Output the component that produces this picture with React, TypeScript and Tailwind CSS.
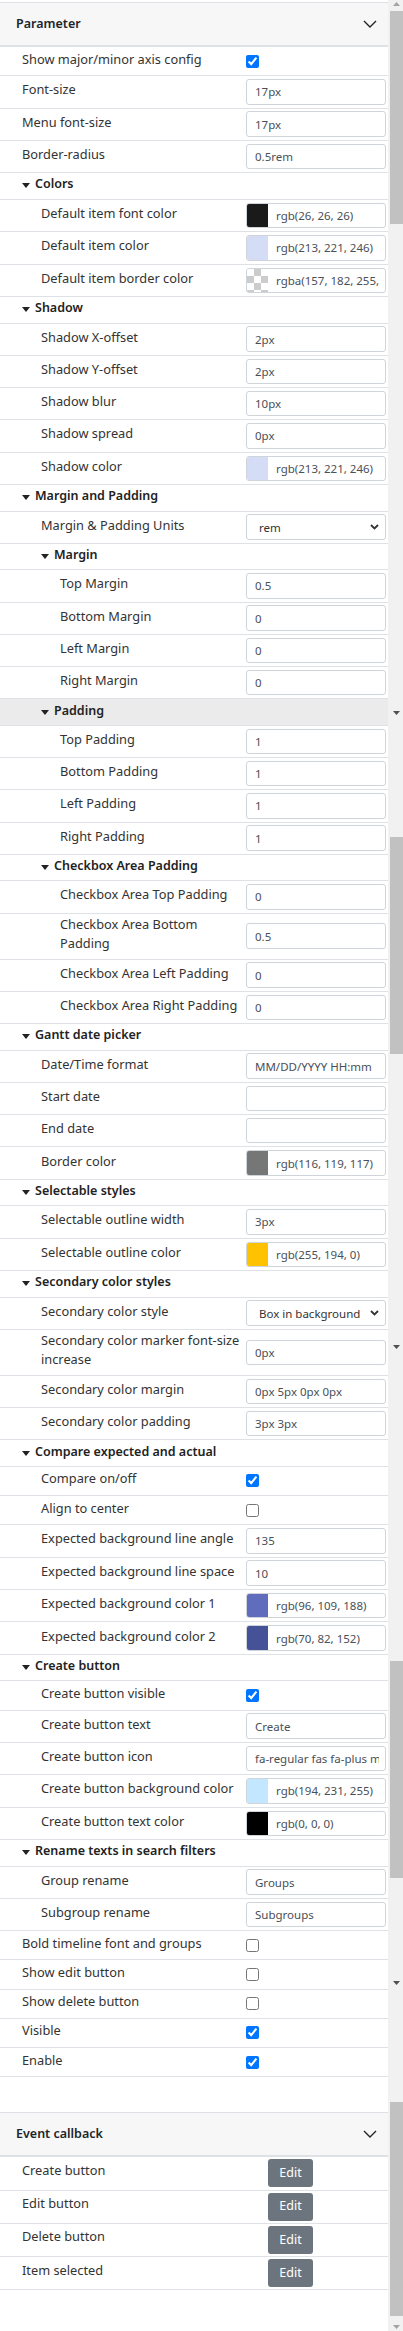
type Item =
  | { k: 'check'; label: string; on: boolean; lv: number }
  | { k: 'input'; label: string; v: string; lv: number; tall?: boolean }
  | { k: 'color'; label: string; v: string; sw: string; lv: number }
  | { k: 'select'; label: string; v: string; lv: number }
  | { k: 'head'; label: string; lv: number; hl?: boolean }

const indent = ['pl-[22px]', 'pl-[41px]', 'pl-[60px]']

const items: Item[] = [
  { k: 'check', label: 'Show major/minor axis config', on: true, lv: 0 },
  { k: 'input', label: 'Font-size', v: '17px', lv: 0 },
  { k: 'input', label: 'Menu font-size', v: '17px', lv: 0 },
  { k: 'input', label: 'Border-radius', v: '0.5rem', lv: 0 },
  { k: 'head', label: 'Colors', lv: 0 },
  { k: 'color', label: 'Default item font color', v: 'rgb(26, 26, 26)', sw: 'bg-[#1a1a1a]', lv: 1 },
  { k: 'color', label: 'Default item color', v: 'rgb(213, 221, 246)', sw: 'bg-[#d5ddf6]', lv: 1 },
  { k: 'color', label: 'Default item border color', v: 'rgba(157, 182, 255, 0)', sw: 'checker', lv: 1 },
  { k: 'head', label: 'Shadow', lv: 0 },
  { k: 'input', label: 'Shadow X-offset', v: '2px', lv: 1 },
  { k: 'input', label: 'Shadow Y-offset', v: '2px', lv: 1 },
  { k: 'input', label: 'Shadow blur', v: '10px', lv: 1 },
  { k: 'input', label: 'Shadow spread', v: '0px', lv: 1 },
  { k: 'color', label: 'Shadow color', v: 'rgb(213, 221, 246)', sw: 'bg-[#d5ddf6]', lv: 1 },
  { k: 'head', label: 'Margin and Padding', lv: 0 },
  { k: 'select', label: 'Margin & Padding Units', v: 'rem', lv: 1 },
  { k: 'head', label: 'Margin', lv: 1 },
  { k: 'input', label: 'Top Margin', v: '0.5', lv: 2 },
  { k: 'input', label: 'Bottom Margin', v: '0', lv: 2 },
  { k: 'input', label: 'Left Margin', v: '0', lv: 2 },
  { k: 'input', label: 'Right Margin', v: '0', lv: 2 },
  { k: 'head', label: 'Padding', lv: 1, hl: true },
  { k: 'input', label: 'Top Padding', v: '1', lv: 2 },
  { k: 'input', label: 'Bottom Padding', v: '1', lv: 2 },
  { k: 'input', label: 'Left Padding', v: '1', lv: 2 },
  { k: 'input', label: 'Right Padding', v: '1', lv: 2 },
  { k: 'head', label: 'Checkbox Area Padding', lv: 1 },
  { k: 'input', label: 'Checkbox Area Top Padding', v: '0', lv: 2 },
  { k: 'input', label: 'Checkbox Area Bottom Padding', v: '0.5', lv: 2, tall: true },
  { k: 'input', label: 'Checkbox Area Left Padding', v: '0', lv: 2 },
  { k: 'input', label: 'Checkbox Area Right Padding', v: '0', lv: 2 },
  { k: 'head', label: 'Gantt date picker', lv: 0 },
  { k: 'input', label: 'Date/Time format', v: 'MM/DD/YYYY HH:mm', lv: 1 },
  { k: 'input', label: 'Start date', v: '', lv: 1 },
  { k: 'input', label: 'End date', v: '', lv: 1 },
  { k: 'color', label: 'Border color', v: 'rgb(116, 119, 117)', sw: 'bg-[#747775]', lv: 1 },
  { k: 'head', label: 'Selectable styles', lv: 0 },
  { k: 'input', label: 'Selectable outline width', v: '3px', lv: 1 },
  { k: 'color', label: 'Selectable outline color', v: 'rgb(255, 194, 0)', sw: 'bg-[#ffc200]', lv: 1 },
  { k: 'head', label: 'Secondary color styles', lv: 0 },
  { k: 'select', label: 'Secondary color style', v: 'Box in background', lv: 1 },
  { k: 'input', label: 'Secondary color marker font-size increase', v: '0px', lv: 1, tall: true },
  { k: 'input', label: 'Secondary color margin', v: '0px 5px 0px 0px', lv: 1 },
  { k: 'input', label: 'Secondary color padding', v: '3px 3px', lv: 1 },
  { k: 'head', label: 'Compare expected and actual', lv: 0 },
  { k: 'check', label: 'Compare on/off', on: true, lv: 1 },
  { k: 'check', label: 'Align to center', on: false, lv: 1 },
  { k: 'input', label: 'Expected background line angle', v: '135', lv: 1 },
  { k: 'input', label: 'Expected background line space', v: '10', lv: 1 },
  { k: 'color', label: 'Expected background color 1', v: 'rgb(96, 109, 188)', sw: 'bg-[#606dbc]', lv: 1 },
  { k: 'color', label: 'Expected background color 2', v: 'rgb(70, 82, 152)', sw: 'bg-[#465298]', lv: 1 },
  { k: 'head', label: 'Create button', lv: 0 },
  { k: 'check', label: 'Create button visible', on: true, lv: 1 },
  { k: 'input', label: 'Create button text', v: 'Create', lv: 1 },
  { k: 'input', label: 'Create button icon', v: 'fa-regular fas fa-plus me-2', lv: 1 },
  { k: 'color', label: 'Create button background color', v: 'rgb(194, 231, 255)', sw: 'bg-[#c2e7ff]', lv: 1 },
  { k: 'color', label: 'Create button text color', v: 'rgb(0, 0, 0)', sw: 'bg-[#000000]', lv: 1 },
  { k: 'head', label: 'Rename texts in search filters', lv: 0 },
  { k: 'input', label: 'Group rename', v: 'Groups', lv: 1 },
  { k: 'input', label: 'Subgroup rename', v: 'Subgroups', lv: 1 },
  { k: 'check', label: 'Bold timeline font and groups', on: false, lv: 0 },
  { k: 'check', label: 'Show edit button', on: false, lv: 0 },
  { k: 'check', label: 'Show delete button', on: false, lv: 0 },
  { k: 'check', label: 'Visible', on: true, lv: 0 },
  { k: 'check', label: 'Enable', on: true, lv: 0 },
]

const events = ['Create button', 'Edit button', 'Delete button', 'Item selected']

function Chevron() {
  return (
    <svg width="14" height="8" viewBox="0 0 14 8" fill="none">
      <path d="M1 1l6 6 6-6" stroke="#212529" strokeWidth="1.4" />
    </svg>
  )
}

function Caret() {
  return (
    <svg width="8" height="5" viewBox="0 0 8 5" className="mr-[5px] shrink-0">
      <path d="M0 0h8L4 5z" fill="#222" />
    </svg>
  )
}

function PanelHeader({ title }: { title: string }) {
  return (
    <div className="flex items-center justify-between h-[45px] pl-4 pr-[11px] bg-[#f7f7f7] border-t border-b-2 border-[#dee2e6]">
      <span className="font-semibold text-[12.5px] text-[#212529]">{title}</span>
      <Chevron />
    </div>
  )
}

function Label({ text, lv }: { text: string; lv: number }) {
  return <div className={`flex-1 min-w-0 pr-[4px] pb-[4px] leading-[19px] ${indent[lv]}`}>{text}</div>
}

function Field({ children }: { children: React.ReactNode }) {
  return (
    <div className="w-[140px] mr-[2px] h-[25.5px] border border-[#ced4da] rounded-[3px] flex items-center overflow-hidden bg-white">
      {children}
    </div>
  )
}

function TextValue({ v }: { v: string }) {
  return (
    <input
      readOnly
      value={v}
      className="w-full min-w-0 h-full bg-transparent outline-none pl-[8px] pr-[6px] text-[11.5px] text-[#495057]"
    />
  )
}

function Row({ item }: { item: Item }) {
  if (item.k === 'head') {
    return (
      <div
        className={`flex items-center h-[26.5px] border-b border-[#dee2e6] font-semibold text-[12.5px] text-[#222] ${indent[item.lv]} ${item.hl ? 'bg-[#ebebeb]' : ''}`}
      >
        <Caret />
        <span className="pb-[2px]">{item.label}</span>
      </div>
    )
  }
  if (item.k === 'check') {
    return (
      <div className="flex items-center h-[29.25px] border-b border-[#dee2e6]">
        <Label text={item.label} lv={item.lv} />
        <div className="w-[142px] flex items-center">
          <input type="checkbox" defaultChecked={item.on} className="m-0 w-[13px] h-[13px]" />
        </div>
      </div>
    )
  }
  if (item.k === 'color') {
    return (
      <div className="flex items-center h-[32.5px] border-b border-[#dee2e6]">
        <Label text={item.label} lv={item.lv} />
        <Field>
          {item.sw === 'checker' ? (
            <div className="w-[21px] h-full shrink-0 bg-[conic-gradient(#cccccc_25%,#ffffff_0_50%,#cccccc_0_75%,#ffffff_0)] bg-[length:14px_14px]" />
          ) : (
            <div className={`w-[21px] h-full shrink-0 ${item.sw}`} />
          )}
          <TextValue v={item.v} />
        </Field>
      </div>
    )
  }
  if (item.k === 'select') {
    return (
      <div className="flex items-center h-[32.25px] border-b border-[#dee2e6]">
        <Label text={item.label} lv={item.lv} />
        <Field>
          <span className="flex-1 pl-[12px] text-[11.5px] text-[#333]">{item.v}</span>
          <svg width="9" height="6" viewBox="0 0 9 6" fill="none" className="mr-[6px]">
            <path d="M1 1l3.5 3.5L8 1" stroke="#333" strokeWidth="1.8" />
          </svg>
        </Field>
      </div>
    )
  }
  return (
    <div className={`flex items-center border-b border-[#dee2e6] ${item.tall ? 'h-[46px]' : 'h-[32.25px]'}`}>
      <Label text={item.label} lv={item.lv} />
      <Field>
        <TextValue v={item.v} />
      </Field>
    </div>
  )
}

function ArrowDown({ light }: { light?: boolean }) {
  return (
    <div className="h-[6px] flex items-center justify-center pl-[2px]">
      <svg width="7" height="4" viewBox="0 0 7 4">
        <path d="M0 0h7L3.5 4z" fill={light ? '#a3a3a3' : '#505050'} />
      </svg>
    </div>
  )
}

function Scrollbar() {
  return (
    <div className="w-[15px] flex flex-col bg-[#f1f1f1]">
      <div className="h-[11px] flex justify-center pt-[2px] pl-[2px]">
        <svg width="7" height="4" viewBox="0 0 7 4">
          <path d="M0 4h7L3.5 0z" fill="#a3a3a3" />
        </svg>
      </div>
      <div className="h-[213px] ml-[2px] bg-[#c1c1c1]" />
      <div className="h-[486px]" />
      <ArrowDown />
      <div className="h-[121px]" />
      <div className="h-[217px] ml-[2px] bg-[#c1c1c1]" />
      <div className="h-[290px]" />
      <ArrowDown />
      <div className="h-[311px]" />
      <div className="h-[217px] ml-[2px] bg-[#c1c1c1]" />
      <div className="h-[102px]" />
      <ArrowDown />
      <div className="h-[116px]" />
      <div className="h-[214px] ml-[2px] bg-[#c1c1c1]" />
      <div className="h-[8px]" />
      <ArrowDown light />
      <div className="flex-1" />
    </div>
  )
}

export default function App() {
  return (
    <div className="w-[403px] h-[2331px] flex bg-white overflow-hidden font-['Noto_Sans',sans-serif] text-[12.8px] text-[#333]">
      <div className="w-[388px] flex flex-col pt-[2px]">
        <PanelHeader title="Parameter" />
        {items.map((item, i) => (
          <Row key={i} item={item} />
        ))}
        <div className="h-[35px]" />
        <PanelHeader title="Event callback" />
        {events.map((e) => (
          <div key={e} className="flex items-center h-[33.25px] border-b border-[#dee2e6]">
            <div className="flex-1 pl-[22px] pb-[6px] leading-[19px]">{e}</div>
            <div className="w-[120px]">
              <button className="w-[45px] h-[28px] rounded-[3px] bg-[#6c757d] text-white text-[12.5px]">Edit</button>
            </div>
          </div>
        ))}
      </div>
      <Scrollbar />
    </div>
  )
}
